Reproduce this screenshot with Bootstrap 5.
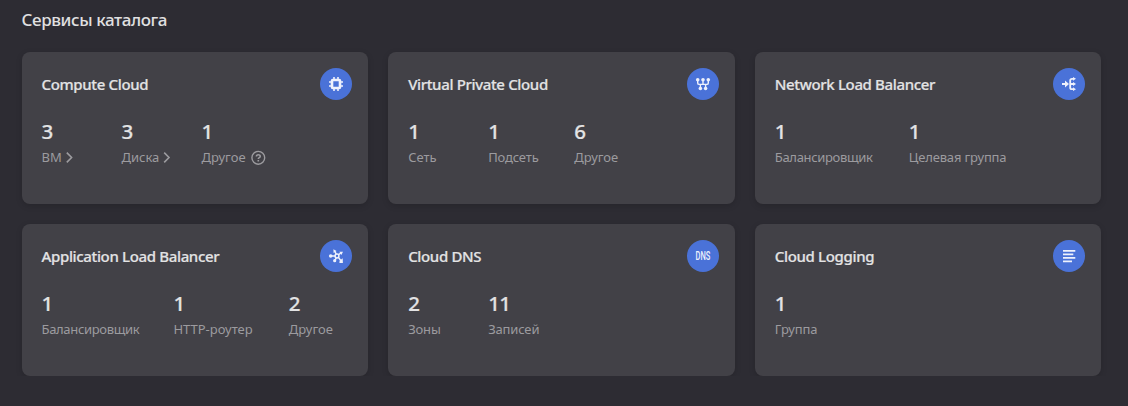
<!DOCTYPE html>
<html lang="ru" data-bs-theme="dark">
<head>
<meta charset="utf-8">
<meta name="viewport" content="width=device-width, initial-scale=1">
<title>Сервисы каталога</title>
<link href="https://cdn.jsdelivr.net/npm/bootstrap@5.3.0/dist/css/bootstrap.min.css" rel="stylesheet">
<style>
body{background:#2d2c33;color:#e3e3e4;font-family:"Noto Sans","Open Sans",sans-serif}
.page{padding:8px 26.5px 0 21.5px}
.page-title{font-size:17px;line-height:24px;font-weight:500;margin-bottom:20px;color:#e0e0e1;letter-spacing:-.39px}
.services{--bs-gutter-x:20px;--bs-gutter-y:20px}
.service{height:152px;border:0;border-radius:8px;background:#424147;box-shadow:0 2px 6px rgba(0,0,0,.15);padding:16px 16px 0 20px;color:inherit}
.service-name{font-size:15px;line-height:20px;font-weight:500;color:#e3e3e4;letter-spacing:-.35px;-webkit-text-stroke:.2px currentColor}
.service-icon{width:32px;height:32px;background:#4a72d8;flex:none}
.service-icon svg{width:16px;height:16px;fill:none;stroke:#eef1fc;overflow:visible}
.stats{margin-top:18px}
.stat{min-width:80px;padding-right:34px;white-space:nowrap}
.stat-value{font-size:20.5px;line-height:26px;font-weight:500;letter-spacing:-.6px;-webkit-text-stroke:.2px currentColor}
.stat-label{font-size:13px;line-height:18px;color:#9c9b9f;margin-top:4px}
.tight{letter-spacing:-.33px}
.snug{letter-spacing:-.15px}
.stat-xl{min-width:133.9px}
.stat-lg{min-width:131.9px}
.stat-md{min-width:115.4px}
.stat-sm{min-width:86px}
</style>
</head>
<body>
<main class="page">
<h1 class="page-title">Сервисы каталога</h1>
<div class="row row-cols-3 services">
  <div class="col"><section class="card service">
    <div class="d-flex justify-content-between align-items-center"><h2 class="service-name mb-0">Compute Cloud</h2>
      <span class="service-icon rounded-circle d-flex align-items-center justify-content-center"><svg viewBox="0 0 16 16"><rect x="4" y="4" width="8" height="8" rx=".8" stroke-width="2.6"/><path d="M6 1v2M10 1v2M6 13v2M10 13v2M1 6h2M1 10h2M13 6h2M13 10h2" stroke-width="1.6"/></svg></span></div>
    <div class="d-flex stats">
      <div class="stat"><div class="stat-value">3</div><div class="stat-label d-flex align-items-center"><span>ВМ</span><svg width="8" height="12" viewBox="0 0 8 12" class="ms-1" fill="none" stroke="currentColor" stroke-width="1.6"><path d="m.8 1.6 4.8 4.9-4.8 4.9"/></svg></div></div>
      <div class="stat pe-0"><div class="stat-value">3</div><div class="stat-label d-flex align-items-center"><span>Диска</span><svg width="8" height="12" viewBox="0 0 8 12" class="ms-1" fill="none" stroke="currentColor" stroke-width="1.6"><path d="m1.2 1.6 4.8 4.9-4.8 4.9"/></svg></div></div>
      <div class="stat"><div class="stat-value">1</div><div class="stat-label d-flex align-items-center"><span>Другое</span><svg width="16" height="16" viewBox="0 0 16 16" class="ms-1" fill="none" stroke="currentColor" stroke-width="1.4"><circle cx="8.3" cy="8.8" r="6.4"/><path d="M6.4 7.6c0-2.6 3.9-2.4 3.8-.2 0 1.2-1.9 1.2-1.9 2.5M8.3 10.9v1.5" stroke-width="1.6"/></svg></div></div>
    </div></section></div>
  <div class="col"><section class="card service">
    <div class="d-flex justify-content-between align-items-center"><h2 class="service-name mb-0">Virtual Private Cloud</h2>
      <span class="service-icon rounded-circle d-flex align-items-center justify-content-center"><svg viewBox="0 0 16 16" stroke-width="1.4"><path d="M2.7 4v2.9q0 1.5 1.5 1.5h7.6q1.5 0 1.5-1.5V4M8 4v4.4M5.4 8.4V12M10.6 8.4V12"/><g fill="#eef1fc" stroke="none"><circle cx="2.7" cy="3.7" r="1.8"/><circle cx="8" cy="3.7" r="1.8"/><circle cx="13.3" cy="3.7" r="1.8"/><circle cx="5.4" cy="12.5" r="1.8"/><circle cx="10.6" cy="12.5" r="1.8"/></g></svg></span></div>
    <div class="d-flex stats">
      <div class="stat"><div class="stat-value">1</div><div class="stat-label">Сеть</div></div>
      <div class="stat stat-sm"><div class="stat-value">1</div><div class="stat-label snug">Подсеть</div></div>
      <div class="stat"><div class="stat-value">6</div><div class="stat-label">Другое</div></div>
    </div></section></div>
  <div class="col"><section class="card service">
    <div class="d-flex justify-content-between align-items-center"><h2 class="service-name mb-0">Network Load Balancer</h2>
      <span class="service-icon rounded-circle d-flex align-items-center justify-content-center"><svg viewBox="0 0 16 16" stroke-width="1.8"><path d="M1 8h5M13 2.8h-2q-1.8 0-1.8 1.8v6.8q0 1.8 1.8 1.8h2M9.2 8H13"/><path d="M4 4.6 8 8 4 11.4z" fill="#eef1fc" stroke="none"/><path d="M12 .9 15 2.8 12 4.7zM12 6.1 15 8l-3 1.9zM12 11.3l3 1.9-3 1.9z" fill="#eef1fc" stroke="none"/></svg></span></div>
    <div class="d-flex stats">
      <div class="stat stat-xl"><div class="stat-value">1</div><div class="stat-label tight">Балансировщик</div></div>
      <div class="stat"><div class="stat-value">1</div><div class="stat-label snug">Целевая группа</div></div>
    </div></section></div>
  <div class="col"><section class="card service">
    <div class="d-flex justify-content-between align-items-center"><h2 class="service-name mb-0">Application Load Balancer</h2>
      <span class="service-icon rounded-circle d-flex align-items-center justify-content-center"><svg viewBox="0 0 16 16" stroke-width="1.5"><circle cx="9" cy="8" r="1.9"/><path d="M7 8H3M8.2 6.2 7 3.5M10.5 6.7 13 5M10.4 9.4 13 12.8M8.2 9.8 7 12.5"/><g fill="#eef1fc" stroke="none"><circle cx="2.7" cy="8" r="1.8"/><path d="M5.4 1.2 8.6 2.9 5.6 4.9zM11.3 3.8l3.7-.1-1.6 3.2zM11.6 12.8l3.1-2.5.2 4.8-3.5-.2z"/><circle cx="6.7" cy="12.7" r="1.6"/></g></svg></span></div>
    <div class="d-flex stats">
      <div class="stat stat-lg"><div class="stat-value">1</div><div class="stat-label tight">Балансировщик</div></div>
      <div class="stat stat-md"><div class="stat-value">1</div><div class="stat-label">HTTP-роутер</div></div>
      <div class="stat pe-0"><div class="stat-value">2</div><div class="stat-label">Другое</div></div>
    </div></section></div>
  <div class="col"><section class="card service">
    <div class="d-flex justify-content-between align-items-center"><h2 class="service-name mb-0">Cloud DNS</h2>
      <span class="service-icon rounded-circle d-flex align-items-center justify-content-center"><svg viewBox="0 0 16 16"><text x=".6" y="12.2" textLength="14.8" lengthAdjust="spacingAndGlyphs" fill="#eef1fc" stroke="none" font-family="Roboto, sans-serif" font-weight="500" font-size="12">DNS</text></svg></span></div>
    <div class="d-flex stats">
      <div class="stat"><div class="stat-value">2</div><div class="stat-label snug">Зоны</div></div>
      <div class="stat"><div class="stat-value">11</div><div class="stat-label snug">Записей</div></div>
    </div></section></div>
  <div class="col"><section class="card service">
    <div class="d-flex justify-content-between align-items-center"><h2 class="service-name mb-0">Cloud Logging</h2>
      <span class="service-icon rounded-circle d-flex align-items-center justify-content-center"><svg viewBox="0 0 16 16" stroke-width="1.7"><path d="M2 2.9h12.3M2 6.3h10.3M2 9.9h12.3M2 13.3h9"/></svg></span></div>
    <div class="d-flex stats">
      <div class="stat"><div class="stat-value">1</div><div class="stat-label snug">Группа</div></div>
    </div></section></div>
</div>
</main>
</body>
</html>
